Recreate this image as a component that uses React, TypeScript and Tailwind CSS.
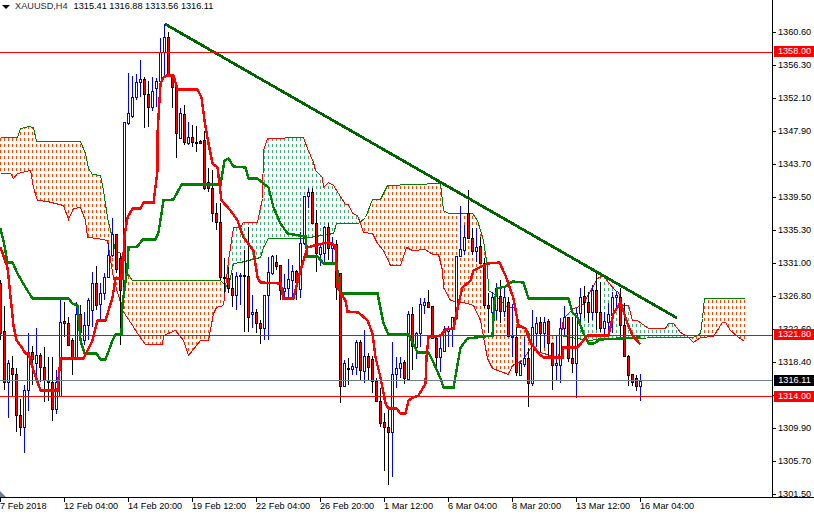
type Pt = [number, number];

// candles at x = 4 * index: [high, bodyTop, bodyBottom, low, bull]
const candles: [number, number, number, number, number][] = [
  [280, 283, 333, 340, 0], [306, 331, 382, 390, 0], [360, 363, 382, 418, 1], [356, 368, 374, 396, 0],
  [368, 374, 415, 432, 0], [399, 415, 427, 436, 0], [385, 390, 427, 453, 1], [333, 352, 390, 411, 1],
  [346, 352, 359, 385, 0], [328, 355, 363, 375, 1], [353, 355, 367, 382, 0], [347, 367, 380, 402, 0],
  [357, 380, 382, 401, 0], [357, 382, 409, 421, 0], [370, 382, 409, 414, 1], [297, 322, 396, 396, 1],
  [302, 321, 323, 337, 0], [317, 323, 345, 345, 0], [338, 340, 357, 375, 0], [302, 314, 357, 357, 1],
  [305, 314, 332, 340, 0], [312, 325, 340, 345, 1], [298, 300, 325, 340, 1], [272, 283, 310, 327, 1],
  [266, 283, 305, 310, 0], [283, 293, 304, 320, 1], [273, 277, 293, 300, 1], [243, 255, 277, 278, 1],
  [218, 234, 255, 257, 1], [234, 234, 269, 273, 0], [253, 258, 290, 345, 0], [122, 122, 290, 295, 1],
  [73, 113, 123, 125, 1], [76, 97, 116, 118, 1], [74, 82, 97, 100, 1], [60, 79, 82, 97, 1],
  [77, 79, 94, 128, 0], [81, 94, 107, 127, 0], [77, 91, 107, 111, 1], [78, 81, 88, 107, 1],
  [38, 52, 81, 83, 1], [24, 37, 52, 75, 1], [32, 37, 74, 77, 0], [74, 74, 87, 108, 0],
  [83, 87, 133, 158, 0], [108, 113, 138, 139, 1], [105, 114, 142, 145, 0], [122, 137, 143, 145, 1],
  [125, 137, 142, 147, 0], [126, 142, 143, 152, 0], [140, 141, 143, 143, 0], [131, 140, 188, 190, 0],
  [168, 182, 188, 192, 0], [170, 188, 213, 222, 0], [203, 213, 222, 230, 0], [203, 222, 277, 280, 0],
  [258, 277, 278, 293, 0], [267, 278, 288, 293, 0], [273, 288, 295, 307, 0], [272, 276, 295, 310, 1],
  [273, 275, 276, 305, 1], [250, 275, 276, 332, 0], [227, 276, 317, 332, 0], [295, 312, 314, 328, 1],
  [309, 312, 323, 333, 0], [320, 323, 328, 344, 0], [295, 295, 328, 340, 1], [257, 272, 295, 340, 1],
  [255, 256, 273, 275, 1], [255, 262, 266, 270, 0], [265, 265, 290, 300, 0], [274, 288, 291, 300, 1],
  [259, 279, 288, 298, 1], [265, 271, 280, 297, 1], [270, 271, 282, 300, 0], [232, 243, 289, 298, 1],
  [196, 196, 243, 245, 1], [188, 192, 196, 208, 1], [188, 192, 223, 223, 0], [210, 223, 253, 272, 0],
  [245, 247, 254, 266, 1], [226, 227, 253, 263, 1], [223, 227, 248, 260, 0], [237, 245, 248, 262, 1],
  [240, 244, 287, 300, 0], [273, 273, 386, 403, 0], [360, 363, 386, 386, 1], [358, 368, 369, 385, 0],
  [363, 366, 369, 375, 1], [340, 342, 367, 375, 1], [340, 342, 370, 380, 0], [330, 356, 371, 383, 1],
  [353, 356, 367, 380, 0], [356, 359, 381, 393, 0], [378, 381, 401, 401, 0], [388, 401, 423, 427, 0],
  [413, 422, 427, 471, 0], [408, 427, 432, 485, 0], [342, 374, 432, 477, 1], [357, 368, 374, 388, 1],
  [357, 363, 368, 378, 1], [360, 362, 378, 384, 0], [311, 314, 379, 380, 1], [307, 314, 346, 370, 0],
  [332, 333, 347, 359, 1], [298, 304, 333, 347, 1], [298, 302, 305, 314, 1], [290, 302, 307, 307, 0],
  [306, 306, 338, 339, 0], [336, 338, 357, 372, 0], [336, 348, 357, 372, 1], [326, 329, 351, 351, 1],
  [326, 328, 331, 347, 1], [317, 317, 328, 347, 1], [256, 256, 318, 320, 1], [206, 249, 256, 256, 1],
  [225, 237, 250, 255, 1], [190, 213, 238, 238, 0], [228, 238, 251, 255, 0], [228, 247, 251, 262, 1],
  [237, 246, 263, 263, 0], [258, 263, 305, 308, 0], [293, 305, 308, 333, 0], [292, 297, 312, 332, 1],
  [283, 288, 310, 320, 1], [280, 296, 311, 323, 0], [288, 297, 311, 317, 1], [297, 302, 336, 336, 0],
  [304, 336, 337, 357, 1], [327, 337, 372, 376, 0], [361, 363, 375, 376, 1], [337, 358, 364, 367, 1],
  [348, 358, 383, 407, 0], [310, 327, 383, 386, 1], [317, 323, 333, 347, 1], [317, 322, 333, 352, 0],
  [317, 322, 333, 348, 1], [319, 321, 343, 358, 0], [343, 343, 365, 390, 0], [335, 363, 365, 380, 1],
  [318, 328, 365, 383, 1], [306, 317, 328, 336, 1], [317, 317, 358, 362, 0], [317, 358, 363, 373, 0],
  [308, 313, 363, 398, 1], [288, 297, 313, 323, 1], [286, 296, 302, 318, 0], [292, 302, 312, 323, 0],
  [285, 290, 312, 320, 1], [273, 290, 312, 330, 0], [282, 312, 328, 332, 0], [312, 321, 328, 337, 1],
  [303, 314, 322, 336, 1], [292, 297, 315, 333, 1], [292, 295, 297, 310, 1], [288, 297, 325, 338, 0],
  [303, 325, 356, 357, 0], [355, 356, 375, 386, 0], [374, 374, 382, 386, 0], [375, 378, 386, 391, 0],
  [374, 381, 386, 401, 1],
];

// thick red line
const tenkan: Pt[] = [
  [0, 247], [7, 267], [13, 325], [16, 340], [20, 345], [25, 353], [28, 353], [33, 370], [40, 390], [57, 390],
  [60, 358], [83, 358], [92, 340], [97, 320], [105, 320], [112, 297], [115, 278], [122, 278], [124, 235],
  [127, 217], [132, 208], [140, 208], [143, 202], [153, 202], [157, 170], [157, 133], [160, 83], [163, 77],
  [166, 75], [173, 75], [177, 89], [197, 89], [201, 97], [204, 120], [208, 143], [212, 163], [217, 167],
  [221, 200], [230, 210], [237, 220], [243, 237], [253, 250], [257, 277], [260, 282], [280, 283], [283, 298],
  [293, 298], [300, 270], [307, 247], [317, 244], [328, 242], [335, 245], [337, 287], [345, 300], [347, 311],
  [358, 312], [367, 320], [372, 333], [375, 357], [380, 377], [385, 403], [388, 408], [396, 408], [400, 413],
  [405, 413], [408, 400], [413, 397], [418, 395], [425, 383], [426, 357], [428, 337], [440, 335], [445, 329],
  [453, 328], [458, 303], [462, 287], [470, 280], [473, 270], [487, 263], [499, 262], [505, 275], [513, 298],
  [518, 325], [525, 328], [530, 342], [538, 353], [543, 357], [562, 357], [563, 347], [577, 347], [587, 335],
  [608, 335], [613, 313], [620, 302], [627, 323], [632, 335], [640, 344],
];

// thick green line
const kijun: Pt[] = [
  [0, 228], [3, 240], [7, 262], [12, 262], [17, 273], [25, 287], [32, 298], [68, 298], [72, 303], [77, 305],
  [80, 340], [84, 353], [96, 353], [100, 359], [105, 359], [112, 340], [115, 334], [121, 334], [122, 303],
  [127, 267], [128, 247], [137, 246], [142, 239], [155, 239], [158, 232], [163, 200], [173, 199], [181, 184],
  [220, 184], [224, 160], [228, 158], [233, 166], [245, 167], [248, 178], [257, 178], [263, 183], [268, 187],
  [273, 207], [280, 223], [287, 233], [305, 236], [307, 256], [317, 256], [323, 263], [336, 263], [340, 293],
  [377, 293], [383, 323], [388, 334], [408, 334], [417, 352], [428, 352], [433, 362], [440, 378], [443, 387],
  [453, 387], [460, 347], [467, 338], [492, 335], [494, 300], [497, 288], [505, 286], [512, 281], [523, 282],
  [528, 298], [568, 298], [572, 312], [577, 317], [583, 333], [588, 343], [593, 343], [600, 339], [640, 337],
];

const spanA: Pt[] = [
  [0, 137], [17, 137], [20, 128], [25, 127], [28, 126], [33, 127], [36, 141], [80, 141], [85, 153], [88, 168],
  [92, 174], [100, 175], [103, 190], [107, 217], [110, 230], [115, 250], [120, 253], [123, 267], [132, 280],
  [220, 280], [223, 283], [228, 287], [232, 267], [233, 263], [240, 262], [260, 257], [263, 247], [268, 238],
  [303, 238], [333, 233], [336, 223], [358, 223], [365, 217], [372, 199], [380, 199], [387, 185], [440, 183],
  [443, 210], [448, 213], [472, 213], [477, 220], [483, 240], [487, 267], [488, 290], [493, 293], [507, 307],
  [515, 307], [517, 327], [525, 327], [530, 335], [560, 335], [570, 337], [590, 340], [600, 338], [693, 337],
  [700, 333], [702, 318], [704, 298], [744, 298],
];

const spanB: Pt[] = [
  [0, 173], [10, 173], [13, 178], [17, 173], [30, 170], [33, 187], [37, 200], [47, 201], [63, 205], [68, 219],
  [73, 208], [80, 207], [85, 220], [87, 237], [97, 238], [107, 240], [113, 278], [120, 302], [122, 310],
  [132, 325], [137, 333], [142, 340], [145, 344], [162, 344], [163, 335], [175, 330], [183, 340], [188, 355],
  [200, 340], [208, 340], [213, 313], [216, 307], [223, 305], [228, 260], [233, 227], [240, 227], [243, 222],
  [257, 222], [258, 217], [262, 198], [263, 150], [267, 138], [303, 137], [307, 148], [313, 162], [315, 170],
  [322, 177], [323, 187], [328, 182], [333, 185], [338, 193], [345, 204], [348, 204], [352, 213], [357, 215],
  [360, 223], [363, 232], [372, 233], [377, 243], [383, 250], [390, 265], [400, 265], [406, 247], [412, 250],
  [425, 249], [432, 254], [438, 254], [442, 270], [443, 287], [450, 300], [467, 303], [473, 305], [480, 320],
  [487, 358], [492, 368], [508, 374], [512, 365], [522, 360], [530, 348], [540, 352], [550, 355], [558, 357],
  [563, 318], [573, 308], [582, 305], [597, 278], [603, 275], [608, 282], [615, 290], [618, 292], [622, 305],
  [628, 305], [632, 320], [637, 320], [648, 328], [665, 328], [668, 323], [673, 323], [680, 332], [687, 336],
  [693, 342], [700, 337], [713, 336], [722, 322], [725, 322], [730, 330], [737, 336], [744, 341],
];

const priceLabels = [
  "1360.60", "1356.30", "1352.10", "1347.90", "1343.70", "1339.50", "1335.30", "1331.00",
  "1326.80", "1322.60", "1318.40", "1314.20", "1309.90", "1305.70", "1301.50",
];

const timeLabels = [
  "7 Feb 2018", "12 Feb 04:00", "14 Feb 20:00", "19 Feb 12:00", "22 Feb 04:00", "26 Feb 20:00",
  "1 Mar 12:00", "6 Mar 04:00", "8 Mar 20:00", "13 Mar 12:00", "16 Mar 04:00",
];

function valueAt(line: Pt[], x: number): number {
  for (let i = 1; i < line.length; i++) {
    const [x0, y0] = line[i - 1];
    const [x1, y1] = line[i];
    if (x <= x1) return x1 === x0 ? y1 : y0 + ((y1 - y0) * (x - x0)) / (x1 - x0);
  }
  return line[line.length - 1][1];
}

const toPoints = (line: Pt[]) => line.map(([x, y]) => `${x + 0.5},${y + 0.5}`).join(" ");

function Cloud() {
  const bars = [];
  for (let x = 0; x <= 744; x += 4) {
    const a = Math.round(valueAt(spanA, x));
    const b = Math.round(valueAt(spanB, x));
    if (a === b) continue;
    const top = Math.min(a, b);
    const bottom = Math.max(a, b);
    bars.push(
      <line
        key={x}
        x1={x + 0.5}
        x2={x + 0.5}
        y1={top}
        y2={bottom}
        stroke={a < b ? "#ff4500" : "#3cb371"}
        strokeDasharray="3 3"
        strokeDashoffset={top % 6}
      />
    );
  }
  return (
    <g shapeRendering="crispEdges">
      {bars}
      <polyline points={toPoints(spanB)} fill="none" stroke="#ff0000" />
      <polyline points={toPoints(spanA)} fill="none" stroke="#008000" />
    </g>
  );
}

function Candles() {
  return (
    <g shapeRendering="crispEdges">
      {candles.map(([high, top, bottom, low, bull], i) => {
        const x = i * 4 + 0.5;
        const edge = bull ? "#0000ff" : "#000000";
        return (
          <g key={i}>
            <line x1={x} x2={x} y1={high} y2={low} stroke={edge} />
            <rect
              x={x - 1}
              y={top + 0.5}
              width={2}
              height={bottom - top}
              fill={bull ? "#ffffff" : "#ff0000"}
              stroke={edge}
            />
          </g>
        );
      })}
    </g>
  );
}

function ChartDrawing() {
  return (
    <svg width={772} height={497} className="block">
      <Cloud />
      <Candles />
      <g shapeRendering="crispEdges" fill="none">
        <polyline points={toPoints(kijun)} stroke="#008000" strokeWidth={2.4} />
        <polyline points={toPoints(tenkan)} stroke="#ff0000" strokeWidth={2.4} />
        <line x1={165} y1={24} x2={677} y2={318} stroke="#006400" strokeWidth={2.8} />
        <line x1={0} x2={772} y1={52.5} y2={52.5} stroke="#ff0000" />
        <line x1={0} x2={772} y1={335.5} y2={335.5} stroke="#ff0000" />
        <line x1={0} x2={772} y1={396.5} y2={396.5} stroke="#ff0000" />
        <line x1={0} x2={772} y1={380.5} y2={380.5} stroke="#708090" />
      </g>
      <polygon points="0,491 6,497 0,497" fill="#708090" />
    </svg>
  );
}

function PriceBadge({ className, children }: { className: string; children: string }) {
  return (
    <span
      className={`absolute left-[1px] flex h-[11px] w-[41px] items-center justify-center text-white ${className}`}
    >
      {children}
    </span>
  );
}

export default function App() {
  return (
    <div className="flex h-[514px] w-[814px] flex-col overflow-hidden bg-white font-['Liberation_Sans',sans-serif] text-[9.2px] leading-none text-black">
      <div className="flex h-[497px]">
        <div className="relative w-[772px]">
          <ChartDrawing />
          <div className="absolute left-[2px] top-[2px] flex h-[10px] items-center gap-[5px]">
            <span className="h-0 w-0 border-x-[4px] border-t-[4px] border-x-transparent border-t-black" />
            <span className="text-[#1f2d3d]">XAUUSD,H4</span>
            <span className="ml-[1px]">1315.41 1316.88 1313.56 1316.11</span>
          </div>
        </div>
        <div className="relative w-[42px] border-l border-black pt-[16px]">
          {priceLabels.map((label) => (
            <div key={label} className="flex h-[33px] items-center">
              <span className="h-px w-[3px] bg-black" />
              <span className="ml-[2px]">{label}</span>
            </div>
          ))}
          <PriceBadge className="top-[46px] bg-[#ff0000]">1358.00</PriceBadge>
          <PriceBadge className="top-[329px] bg-[#ff0000]">1321.80</PriceBadge>
          <PriceBadge className="top-[375px] bg-black">1316.11</PriceBadge>
          <PriceBadge className="top-[391px] bg-[#ff0000]">1314.00</PriceBadge>
        </div>
      </div>
      <div className="flex h-[17px] border-t border-black">
        {timeLabels.map((label) => (
          <div key={label} className="relative w-[64px] shrink-0 whitespace-nowrap pt-[4px]">
            <span className="absolute left-0 top-0 h-[4px] w-px bg-black" />
            {label}
          </div>
        ))}
      </div>
    </div>
  );
}
